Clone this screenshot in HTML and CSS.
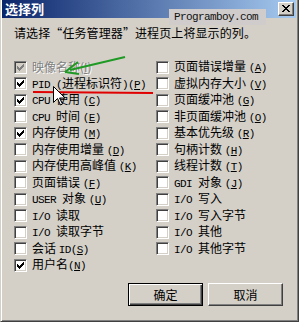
FILE: index.html
```html
<!DOCTYPE html>
<html lang="zh-CN">
<head>
<meta charset="utf-8">
<link rel="stylesheet" href="styles.css">
</head>
<body>
<div class="dialog">
  <div class="titlebar">
    <span class="title">选择列</span>
    <span class="close"><svg width="8" height="7" viewBox="0 0 8 7"><path d="M0 0h2v1h1v1h2v-1h1v-1h2v1h-1v1h-1v1h-1v1h1v1h1v1h1v1h-2v-1h-1v-1h-2v1h-1v1h-2v-1h1v-1h1v-1h1v-1h-1v-1h-1v-1h-1z" fill="#000"/></svg></span>
  </div>
  <div class="content">
    <p class="intro">请选择“任务管理器”进程页上将显示的列。</p>
    <div class="cols">
      <div class="col">
        <div class="item disabled"><span class="cb on dis"><svg viewBox="0 0 7 7"><path d="M6 0h1v3h-1zM5 1h1v3h-1zM4 2h1v3h-1zM3 3h1v3h-1zM2 4h1v3h-1zM1 3h1v3h-1zM0 2h1v3h-1z"/></svg></span><span class="t">映像名称(<u>I</u>)</span></div>
        <div class="item"><span class="cb on"><svg viewBox="0 0 7 7"><path d="M6 0h1v3h-1zM5 1h1v3h-1zM4 2h1v3h-1zM3 3h1v3h-1zM2 4h1v3h-1zM1 3h1v3h-1zM0 2h1v3h-1z"/></svg></span><span class="t"><span class="m">PID (</span>进程标识符<span class="m">)(<u>P</u>)</span></span></div>
        <div class="item"><span class="cb on"><svg viewBox="0 0 7 7"><path d="M6 0h1v3h-1zM5 1h1v3h-1zM4 2h1v3h-1zM3 3h1v3h-1zM2 4h1v3h-1zM1 3h1v3h-1zM0 2h1v3h-1z"/></svg></span><span class="t"><span class="m">CPU </span>使用 <span class="m">(<u>C</u>)</span></span></div>
        <div class="item"><span class="cb"></span><span class="t"><span class="m">CPU </span>时间 <span class="m">(<u>E</u>)</span></span></div>
        <div class="item"><span class="cb on"><svg viewBox="0 0 7 7"><path d="M6 0h1v3h-1zM5 1h1v3h-1zM4 2h1v3h-1zM3 3h1v3h-1zM2 4h1v3h-1zM1 3h1v3h-1zM0 2h1v3h-1z"/></svg></span><span class="t">内存使用 <span class="m">(<u>M</u>)</span></span></div>
        <div class="item"><span class="cb"></span><span class="t">内存使用增量 <span class="m">(<u>D</u>)</span></span></div>
        <div class="item"><span class="cb"></span><span class="t">内存使用高峰值 <span class="m">(<u>K</u>)</span></span></div>
        <div class="item"><span class="cb"></span><span class="t">页面错误 <span class="m">(<u>F</u>)</span></span></div>
        <div class="item"><span class="cb"></span><span class="t"><span class="m">USER </span>对象 <span class="m">(<u>U</u>)</span></span></div>
        <div class="item"><span class="cb"></span><span class="t"><span class="m">I/O </span>读取</span></div>
        <div class="item"><span class="cb"></span><span class="t"><span class="m">I/O </span>读取字节</span></div>
        <div class="item"><span class="cb"></span><span class="t">会话 <span class="m">ID(<u>S</u>)</span></span></div>
        <div class="item"><span class="cb on"><svg viewBox="0 0 7 7"><path d="M6 0h1v3h-1zM5 1h1v3h-1zM4 2h1v3h-1zM3 3h1v3h-1zM2 4h1v3h-1zM1 3h1v3h-1zM0 2h1v3h-1z"/></svg></span><span class="t">用户名<span class="m">(<u>N</u>)</span></span></div>
      </div>
      <div class="col">
        <div class="item"><span class="cb"></span><span class="t">页面错误增量 <span class="m">(<u>A</u>)</span></span></div>
        <div class="item"><span class="cb"></span><span class="t">虚拟内存大小 <span class="m">(<u>V</u>)</span></span></div>
        <div class="item"><span class="cb"></span><span class="t">页面缓冲池 <span class="m">(<u>G</u>)</span></span></div>
        <div class="item"><span class="cb"></span><span class="t">非页面缓冲池 <span class="m">(<u>O</u>)</span></span></div>
        <div class="item"><span class="cb"></span><span class="t">基本优先级 <span class="m">(<u>R</u>)</span></span></div>
        <div class="item"><span class="cb"></span><span class="t">句柄计数 <span class="m">(<u>H</u>)</span></span></div>
        <div class="item"><span class="cb"></span><span class="t">线程计数 <span class="m">(<u>T</u>)</span></span></div>
        <div class="item"><span class="cb"></span><span class="t"><span class="m">GDI </span>对象 <span class="m">(<u>J</u>)</span></span></div>
        <div class="item"><span class="cb"></span><span class="t"><span class="m">I/O </span>写入</span></div>
        <div class="item"><span class="cb"></span><span class="t"><span class="m">I/O </span>写入字节</span></div>
        <div class="item"><span class="cb"></span><span class="t"><span class="m">I/O </span>其他</span></div>
        <div class="item"><span class="cb"></span><span class="t"><span class="m">I/O </span>其他字节</span></div>
      </div>
    </div>
    <div class="buttons">
      <button class="btn default">确定</button>
      <button class="btn">取消</button>
    </div>
  </div>
  <div class="watermark">Programboy.com</div>
  <svg class="annot" width="299" height="322" viewBox="0 0 299 322">
    <path d="M124 57 L69 70" stroke="#1f9a24" stroke-width="2" fill="none"/>
    <path d="M64 72 L77 62 M64 72 L78 74" stroke="#1f9a24" stroke-width="2" fill="none"/>
    <path d="M32 92 L152 93" stroke="#e00000" stroke-width="2" fill="none"/>
    <path d="M52.5 86.5 v16 l4 -4 l3 6.5 l2 -1 l-3 -6 h5.5 z" fill="#fff" stroke="#000" stroke-width="1"/>
  </svg>
</div>
</body>
</html>
```
FILE: styles.css
```css
* { box-sizing: border-box; }
html, body { margin: 0; padding: 0; }
body {
  width: 299px;
  height: 322px;
  background: #d4d0c8;
  overflow: hidden;
  font-family: "Noto Sans CJK SC", "Liberation Sans", sans-serif;
  font-size: 12px;
  color: #000;
}
.dialog {
  position: relative;
  width: 299px;
  height: 322px;
  background: #d4d0c8;
  border-left: 1px solid #d4d0c8;
  border-right: 1px solid #404040;
  border-bottom: 1px solid #404040;
  box-shadow: inset 1px 0 #fff, inset -1px -1px #808080;
  padding: 0 2px 0 1px;
}
.titlebar {
  height: 18px;
  display: flex;
  align-items: center;
  justify-content: space-between;
  padding: 0 2px 0 3px;
  background: linear-gradient(to right, #0a246a, #a6caf0);
}
.title {
  color: #fff;
  font-weight: bold;
  font-size: 13px;
  line-height: 16px;
}
.close {
  width: 16px;
  height: 14px;
  background: #d4d0c8;
  border-top: 1px solid #fff;
  border-left: 1px solid #fff;
  border-right: 1px solid #404040;
  border-bottom: 1px solid #404040;
  box-shadow: inset -1px -1px #808080;
  display: flex;
  align-items: center;
  justify-content: center;
  padding-bottom: 1px;
}
.close svg { display: block; }
.content {
  padding: 8px 0 0 0;
}
.intro {
  margin: 0 0 0 12px;
  line-height: 14px;
  letter-spacing: 0.1px;
}
.cols {
  margin-top: 19px;
  display: grid;
  grid-template-columns: 142px 1fr;
  padding-left: 12px;
}
.item {
  height: 16.5px;
  display: flex;
  align-items: center;
  gap: 5px;
  white-space: nowrap;
  line-height: 14px;
}
.cb {
  flex: none;
  width: 13px;
  height: 13px;
  background: #fff;
  border-top: 1px solid #808080;
  border-left: 1px solid #808080;
  border-right: 1px solid #fff;
  border-bottom: 1px solid #fff;
  box-shadow: inset 1px 1px #404040, inset -1px -1px #d4d0c8;
  padding: 2px;
}
.cb svg { display: block; width: 7px; height: 7px; fill: #000; }
.cb.dis { background: #d4d0c8; }
.cb.dis svg { fill: #808080; }
.disabled .t { color: #808080; text-shadow: 1px 1px #fff; }
.m {
  font-family: "Liberation Mono", monospace;
  font-size: 11px;
  letter-spacing: -0.6px;
}
u { text-decoration-thickness: 1px; text-underline-offset: 1px; }
.buttons {
  margin-top: 9px;
  display: flex;
  justify-content: flex-end;
  gap: 5px;
  padding-right: 13px;
}
.btn {
  width: 75px;
  height: 23px;
  margin: 0;
  padding: 0;
  font: 12px "Noto Sans CJK SC", sans-serif;
  color: #000;
  background: #d4d0c8;
  border-top: 1px solid #fff;
  border-left: 1px solid #fff;
  border-right: 1px solid #404040;
  border-bottom: 1px solid #404040;
  box-shadow: inset -1px -1px #808080;
}
.btn.default {
  border: 1px solid #000;
  box-shadow: inset 1px 1px #fff, inset -1px -1px #404040, inset -2px -2px #808080;
}
.watermark {
  position: absolute;
  left: 168px;
  top: 9px;
  width: 97px;
  height: 16px;
  background: #cfcccb;
  font-family: "Liberation Mono", monospace;
  font-size: 11px;
  letter-spacing: -0.6px;
  line-height: 16px;
  padding-left: 5px;
  color: #111;
}
.annot {
  position: absolute;
  left: 0;
  top: 0;
  pointer-events: none;
}
```
